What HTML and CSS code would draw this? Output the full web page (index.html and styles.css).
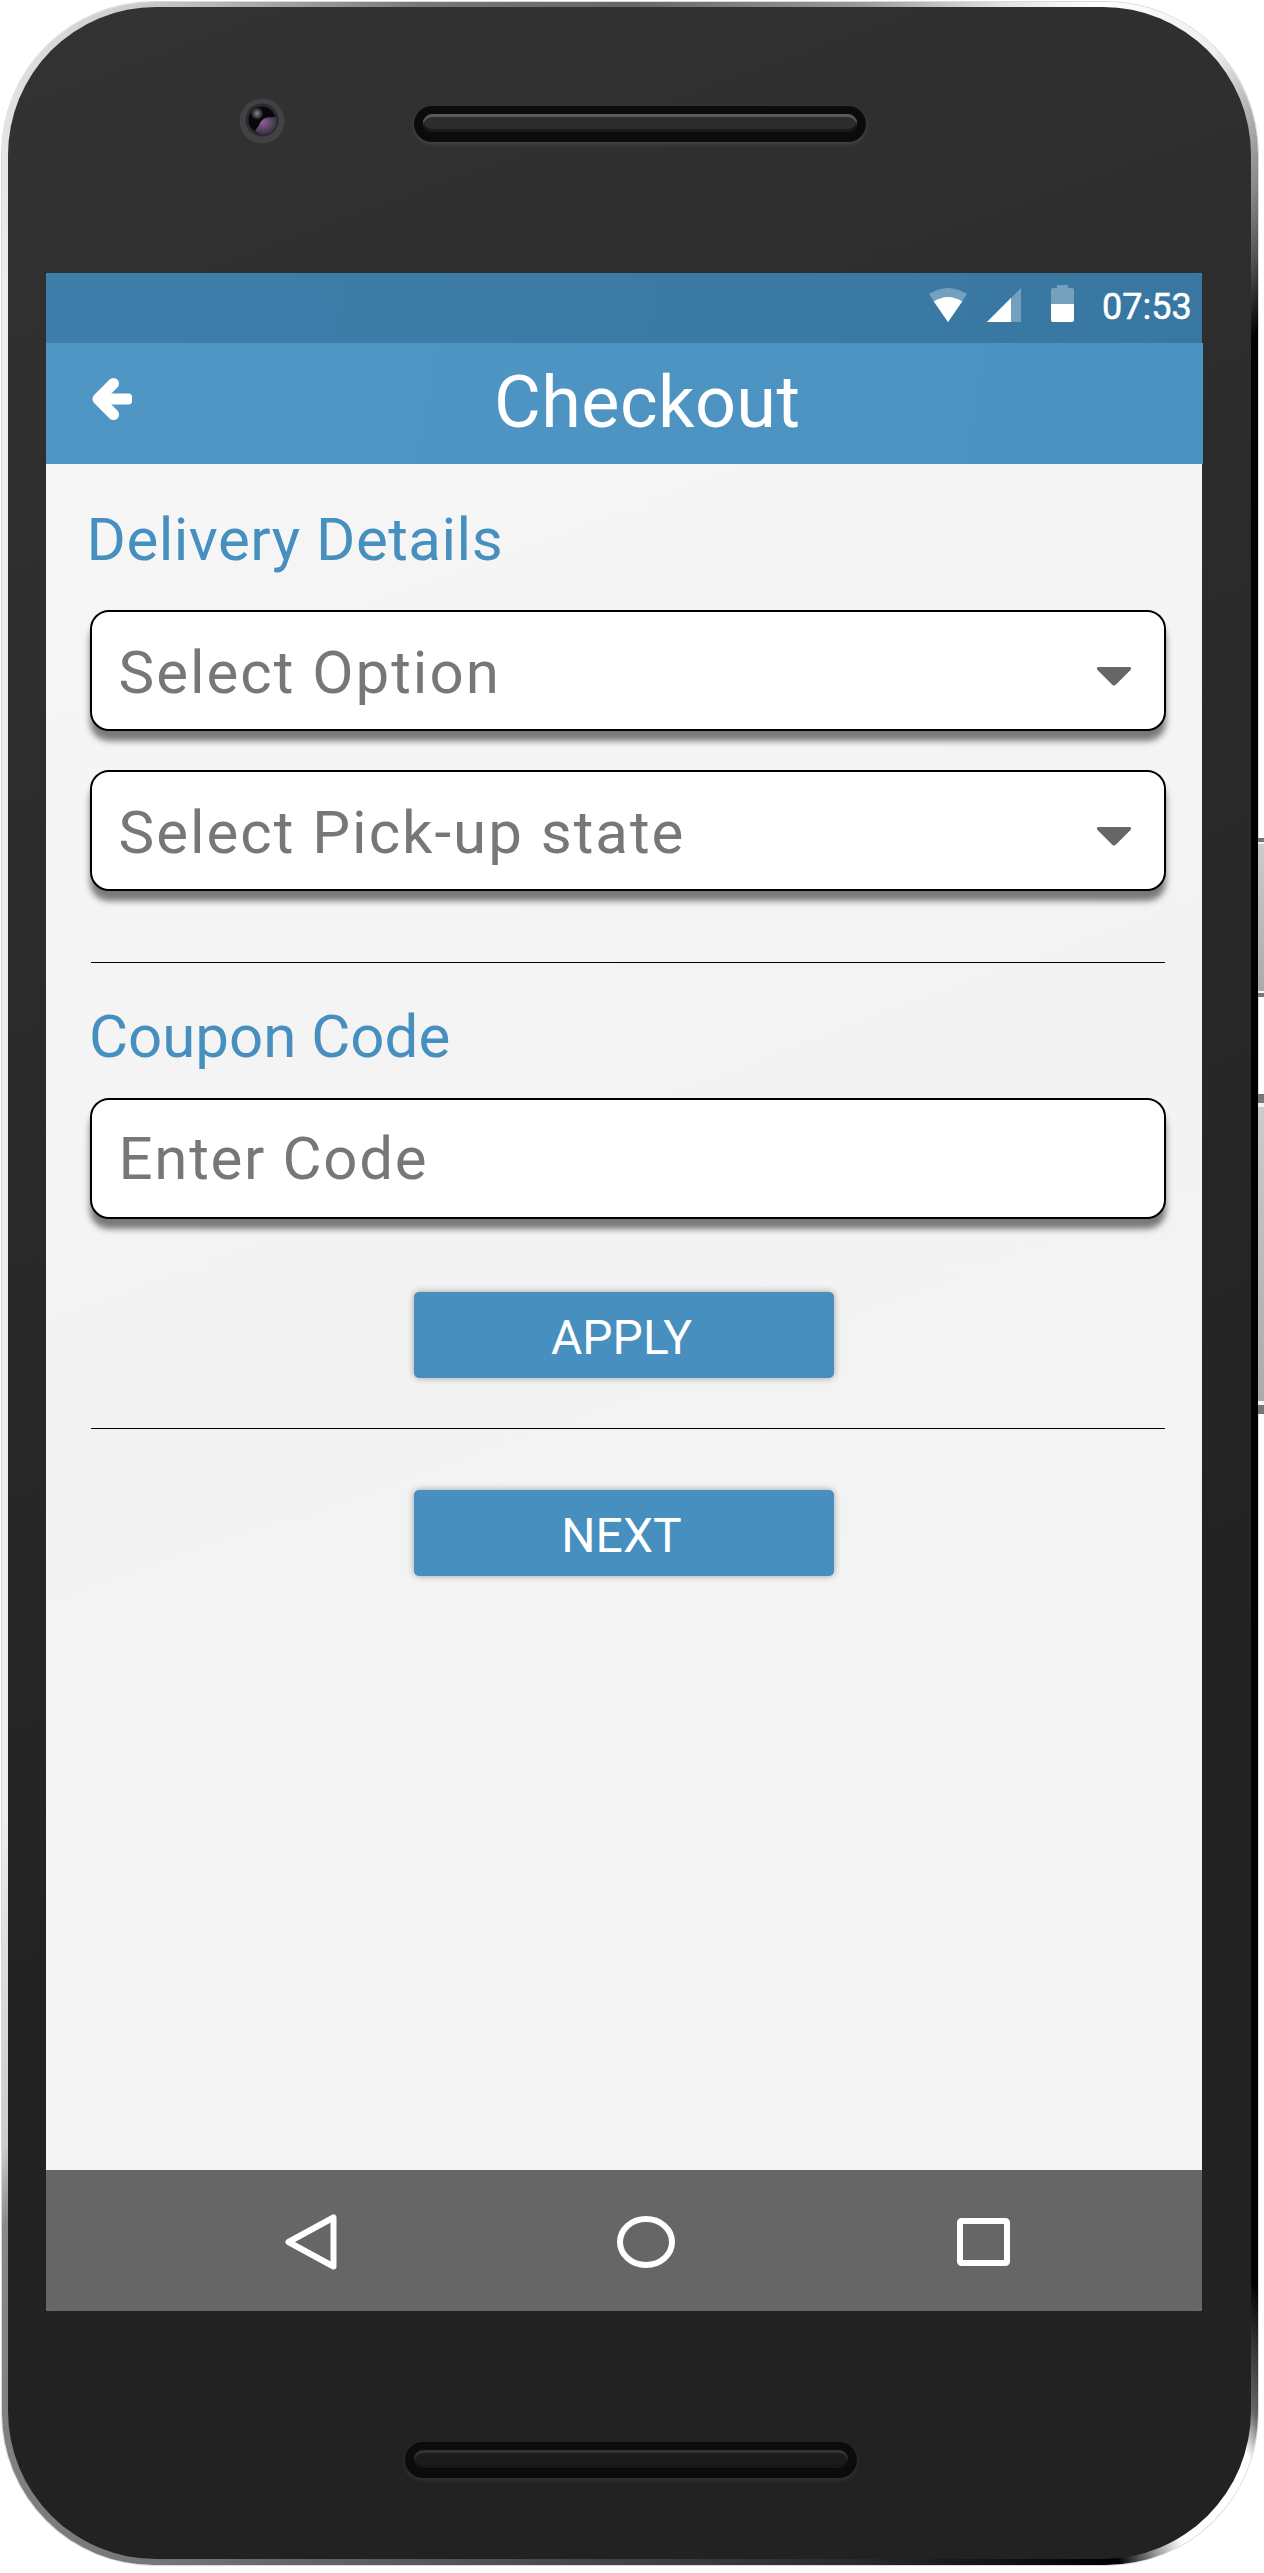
FILE: index.html
```html
<!DOCTYPE html>
<html lang="en">
<head>
<meta charset="utf-8">
<title>Checkout</title>
<link rel="stylesheet" href="styles.css">
</head>
<body>
<div class="device">
  <i class="side-key side-key-power"></i>
  <i class="side-key side-key-volume"></i>
  <div class="rim">
    <div class="shell">
      <div class="bezel bezel-top">
        <svg class="camera" width="48" height="48" viewBox="0 0 48 48">
          <defs>
            <radialGradient id="lens" cx="35%" cy="30%" r="75%">
              <stop offset="0" stop-color="#8a6096"/><stop offset=".5" stop-color="#5f4869"/><stop offset="1" stop-color="#34323d"/>
            </radialGradient>
            <radialGradient id="glint" cx="50%" cy="50%" r="50%">
              <stop offset="0" stop-color="#8a8490"/><stop offset="1" stop-color="#16151a"/>
            </radialGradient>
          </defs>
          <circle cx="24" cy="24" r="22.500" fill="#424242"/>
          <circle cx="24" cy="23" r="16.500" fill="#2b2a33"/>
          <circle cx="24" cy="23" r="13.500" fill="#08080a"/>
          <path d="M38 20L29 20.500Q23 22 21 28L17 34Q23 39 31 36Q40 31 38 20Z" fill="url(#lens)"/>
          <circle cx="19" cy="16.500" r="6" fill="url(#glint)"/>
        </svg>
        <div class="speaker"><div class="grille"></div></div>
      </div>
      <div class="screen">
        <div class="status">
          <svg width="38" height="34" viewBox="0 0 38 34"><path d="M0 6Q19-6 38 6L19 34Z" fill="#fff" opacity=".3"/><path d="M4.800 13.500Q19 4.500 33.200 13.500L19 34Z" fill="#fff"/></svg>
          <svg class="signal" width="34" height="34" viewBox="0 0 34 34"><path d="M34 0V34H0Z" fill="#fff" opacity=".3"/><path d="M24 10V34H0Z" fill="#fff"/></svg>
          <svg class="battery" width="23" height="37" viewBox="0 0 23 37"><path d="M6 0H17V3H21Q23 3 23 5V19H0V5Q0 3 2 3H6Z" fill="#fff" opacity=".3"/><path d="M0 19H23V35Q23 37 21 37H2Q0 37 0 35Z" fill="#fff"/></svg>
          <span class="time">07:53</span>
        </div>
        <header class="header">
          <svg class="back" width="42" height="44" viewBox="0 0 42 44"><path d="M22.500 6.500L7 22L22.500 37.500" fill="none" stroke="#fff" stroke-width="11" stroke-linecap="round" stroke-linejoin="round"/><path d="M8 16.500H37.500Q41 16.500 41 20V24Q41 27.500 37.500 27.500H8Z" fill="#fff"/></svg>
          <h1 class="title">Checkout</h1>
        </header>
        <main class="content">
          <h2 class="section section-delivery">Delivery Details</h2>
          <div class="field select"><span>Select Option</span><svg class="caret" width="36" height="20" viewBox="0 0 36 20"><path d="M2 1H34Q36 2 34.500 4L20 18.500Q18 20.500 16 18.500L1.500 4Q0 2 2 1Z"/></svg></div>
          <div class="field select"><span>Select Pick-up state</span><svg class="caret" width="36" height="20" viewBox="0 0 36 20"><path d="M2 1H34Q36 2 34.500 4L20 18.500Q18 20.500 16 18.500L1.500 4Q0 2 2 1Z"/></svg></div>
          <hr class="rule rule-delivery">
          <h2 class="section section-coupon">Coupon Code</h2>
          <div class="field code"><span>Enter Code</span></div>
          <div class="button button-apply">APPLY</div>
          <hr class="rule rule-coupon">
          <div class="button">NEXT</div>
        </main>
        <nav class="nav">
          <svg width="56" height="58" viewBox="0 0 56 58"><path d="M4.500 29L49.500 4.500V53.500Z"/></svg>
          <svg class="home" width="60" height="58" viewBox="0 0 60 58"><ellipse cx="30" cy="29" rx="26" ry="23"/></svg>
          <svg width="56" height="58" viewBox="0 0 56 58"><rect x="4" y="8" width="47" height="42" rx="1.500"/></svg>
        </nav>
      </div>
      <div class="bezel bezel-bottom"><div class="speaker speaker-dim"><div class="grille"></div></div></div>
    </div>
  </div>
</div>
</body>
</html>
```
FILE: styles.css
```css
* { box-sizing: border-box; }
body { margin: 0; background: #fff; font-family: Roboto, sans-serif; }
h1, h2 { margin: 0; font-weight: 400; }
svg { display: block; flex: none; }

.device { position: relative; width: 1264px; height: 2573px; padding: 2px 0 0 2px; overflow: hidden; }
.rim {
  width: 1256px; height: 2563px; padding: 5px 7px 6px 6px; border-radius: 152px;
  box-shadow: 0 0 0 1px #dadada;
  background: conic-gradient(#666 0deg, #999 10.200deg, #e0e0e0 16.100deg, #fff 20.100deg, #eee 25.400deg, #bbb 27.500deg, #888 29.700deg, #555 31.300deg, #000 33.400deg, #000 148deg, #333 149.500deg, #666 151.100deg, #fff 152.200deg, #fff 156.300deg, #aaa 157.300deg, #000 159.100deg, #2a2a2a 169.800deg, #5c5c5c 191deg, #777 201deg, #828282 209.300deg, #888 213.500deg, #ccc 215.900deg, #eee 230deg, #eee 327.400deg, #e2e2e2 332deg, #ccc 339deg, #777 350.700deg, #666 360deg);
}
.shell { height: 2552px; border-radius: 148px; background: linear-gradient(160deg, #333 0%, #222 70%); }
.side-key { position: absolute; left: 1258px; width: 6px; border: solid #777; border-width: 4px 0; background: linear-gradient(#ccc, #aaa); box-shadow: inset 0 2px #f4f4f4, inset 0 -2px #f4f4f4; }
.side-key-power { top: 838px; height: 159px; }
.side-key-volume { top: 1094px; height: 320px; border-width: 9px 0; box-shadow: inset 0 4px #f4f4f4, inset 0 -4px #f4f4f4; }

.bezel { display: flex; }
.bezel-top { height: 266px; padding: 89px 0 0 230px; gap: 128px; }
.bezel-bottom { padding: 131px 0 0 397px; }
.camera { margin-top: 1px; }
.speaker { width: 452px; height: 36px; margin-top: 10px; padding: 8px 9px; border-radius: 18px; background: #0b0b0b; box-shadow: 0 2px 4px #484848; }
.speaker-dim { margin-top: 0; box-shadow: 0 2px 4px #363636; }
.grille { height: 18px; border-radius: 9px; background: #2c2c2c; box-shadow: inset 0 3px 1px #5c5a5c, inset 0 -3px #1a1a1a; }
.speaker-dim .grille { background: #1b1b1b; box-shadow: inset 0 3px 1px #343434, inset 0 -3px #161616; }

.screen { display: flex; flex-direction: column; width: 1156px; height: 2038px; margin-left: 38px; border-radius: 3px; background: #f4f4f4; }
.status { display: flex; height: 70px; padding: 15px 0 0 883px; border-radius: 3px 3px 0 0; background: linear-gradient(100deg, #3e7eaa, #3877a2); color: #fff; }
.signal { margin-left: 20px; }
.battery { margin: -3px 0 0 30px; }
.time { margin: -2px 0 0 28px; font-size: 36px; line-height: 42px; -webkit-text-stroke: .5px #fff; }
.header { display: flex; width: 1157px; height: 121px; padding: 0 0 2px 45px; background: linear-gradient(100deg, #5096c4, #4b92c0); color: #fff; }
.back { margin: 34px 0 0; }
.title { margin-left: 361px; font-size: 72px; line-height: 119px; letter-spacing: .4px; }

.content { flex: 1; padding: 40px 36px 0 44px; background: linear-gradient(160deg, #f6f6f6, #f3f3f3 45%, #f5f5f5); }
.section { color: #468fbf; font-size: 60px; line-height: 72px; white-space: nowrap; }
.section-delivery { margin: 0 0 34px -3.500px; letter-spacing: .5px; }
.section-coupon { margin: 38px 0 25px -1px; }
.field { display: flex; align-items: center; justify-content: space-between; height: 121px; padding: 0 32px 0 26.500px; border: 2px solid #000; border-radius: 19px; background: #fff; box-shadow: 0 10px 6px rgba(0, 0, 0, .5); color: #777; font-size: 60px; letter-spacing: 2px; white-space: nowrap; }
.select { padding-top: 4px; }
.select + .select { margin-top: 39px; }
.code { letter-spacing: 1.700px; }
.caret { fill: #666; margin-top: 7px; }
.rule { height: 1px; margin: 0 1px; border: 0; background: #000; }
.rule-delivery { margin-top: 71px; }
.rule-coupon { margin: 50px 1px 61px; }
.button { display: flex; justify-content: center; width: 420px; height: 86px; margin-left: 324px; padding-right: 5px; border-radius: 5px; background: #468fbf; box-shadow: 0 0 7px rgba(0, 0, 0, .35); color: #fff; font-size: 48px; line-height: 91px; }
.button-apply { margin-top: 73px; }

.nav { display: flex; align-items: center; justify-content: space-between; height: 141px; padding: 3px 190px 0 238px; border-radius: 0 0 3px 3px; background: #666; }
.nav svg { fill: none; stroke: #fff; stroke-width: 6px; stroke-linejoin: round; }
.nav .home { margin-right: 4px; }
```
